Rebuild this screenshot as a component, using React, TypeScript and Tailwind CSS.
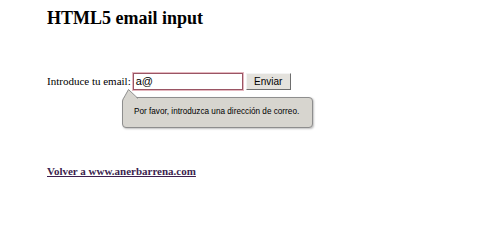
import React from "react";

export default function App() {
  return (
    <div className="relative w-[480px] h-[202px] bg-white overflow-hidden">
      <div className="pl-[47px] pt-[8px]">
        <h1 className="text-[18px] leading-[21px] font-bold text-black" style={{ fontFamily: '"Liberation Serif", serif' }}>
          HTML5 email input
        </h1>
        <div className="mt-[44px] flex items-center h-[17px]">
          <span className="text-[11px] text-black leading-[17px]" style={{ fontFamily: '"Liberation Serif", serif' }}>
            Introduce tu email:
          </span>
          <div className="ml-[2px] w-[110px] h-[17px] border border-[#9a5564] ring-1 ring-[#e4b7bf] bg-white flex items-center pl-[2px]">
            <span className="text-[11px] text-black leading-none" style={{ fontFamily: '"Liberation Sans", sans-serif' }}>a@</span>
          </div>
          <div className="ml-[3px] w-[45px] h-[17px] bg-[#e4e2dd] border border-t-[#f4f4f4] border-l-[#f4f4f4] border-r-[#6e6e6e] border-b-[#6e6e6e] flex items-center justify-center">
            <span className="text-[10px] text-black leading-none" style={{ fontFamily: '"Liberation Sans", sans-serif' }}>Enviar</span>
          </div>
        </div>
        <div className="mt-[67px]">
          <a href="#" className="text-[11px] font-bold text-[#3d1f4f] underline leading-[14px]" style={{ fontFamily: '"Liberation Serif", serif' }}>
            Volver a www.anerbarrena.com
          </a>
        </div>
      </div>

      <div className="absolute left-[122px] top-[97px] w-[191px] h-[31px] rounded-[4px] border border-[#8e8e8e] bg-[#d7d5cf] shadow-[1px_1px_2px_rgba(0,0,0,0.25)] flex items-center pl-[11px]">
        <span className="whitespace-nowrap text-[8.2px] text-black leading-none" style={{ fontFamily: '"Liberation Sans", sans-serif' }}>
          Por favor, introduzca una dirección de correo.
        </span>
        <svg className="absolute left-[0px] top-[-9px]" width="18" height="11" viewBox="0 0 18 11">
          <polygon points="0.5,10 5.5,0.5 15,10" fill="#d7d5cf" />
          <polyline points="0.5,9.5 5.5,0.5 15,9.5" fill="none" stroke="#8e8e8e" strokeWidth="1" />
        </svg>
      </div>
    </div>
  );
}
